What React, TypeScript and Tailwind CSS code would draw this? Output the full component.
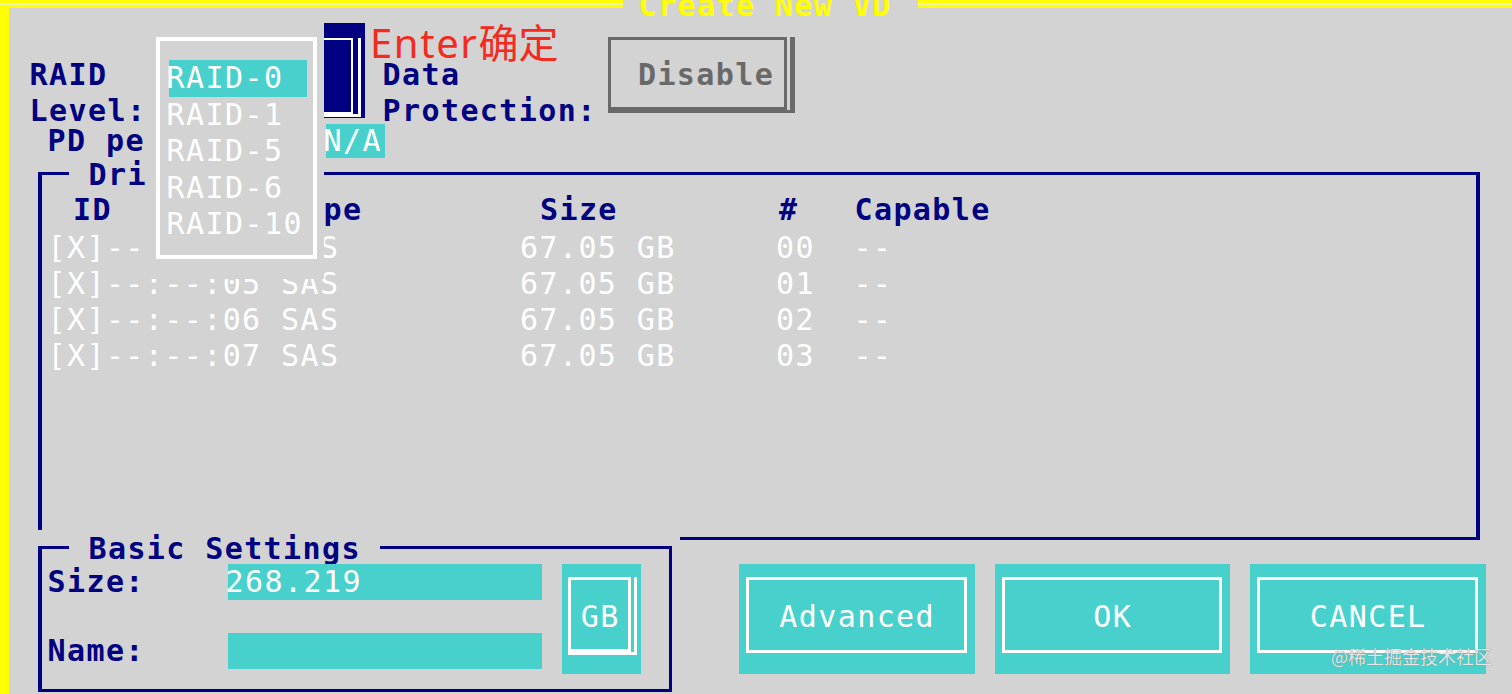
const raidLevels = ["RAID-0", "RAID-1", "RAID-5", "RAID-6", "RAID-10"]

const drives = [
  { id: "[X]--:--:04 SAS", size: "67.05 GB", slot: "00", capable: "--" },
  { id: "[X]--:--:05 SAS", size: "67.05 GB", slot: "01", capable: "--" },
  { id: "[X]--:--:06 SAS", size: "67.05 GB", slot: "02", capable: "--" },
  { id: "[X]--:--:07 SAS", size: "67.05 GB", slot: "03", capable: "--" },
]

// ─── Frame pieces ─────────────────────────────────────────────────────────────

function YellowRule({ className }: { className: string }) {
  return (
    <div className={`flex flex-col ${className}`}>
      <div className="h-[3px] bg-[#ffff00]" />
      <div className="h-[2px] bg-[#f2f2a6]" />
      <div className="h-[3px] bg-[#ffff00]" />
    </div>
  )
}

function PanelTitle({ children }: { children: string }) {
  return (
    <div className="-mt-[18.5px] ml-[27px] h-[36px] w-fit whitespace-pre bg-[#d3d3d3] font-bold text-[#000080]">
      {children}
    </div>
  )
}

function ActionButton({ label, width }: { label: string; width: string }) {
  return (
    <div className={`h-[110px] bg-[#48d1cc] pb-[21px] pl-[7px] pr-[8px] pt-[13px] ${width}`}>
      <div className="flex h-full items-center justify-center border-[3px] border-white pl-[1.4px] pt-[3px] text-white">
        {label}
      </div>
    </div>
  )
}

// first drive row sits under the open list: only its ends show
function DriveId({ id, covered }: { id: string; covered: boolean }) {
  if (!covered) return <>{id}</>
  return (
    <>
      {id.slice(0, 5)}
      <span className="ml-[175.1px]">{id.slice(14)}</span>
    </>
  )
}

// ─── Screen ───────────────────────────────────────────────────────────────────

export default function App() {
  return (
    <div className="relative flex h-[694px] w-[1512px] flex-col overflow-hidden bg-[#d3d3d3] font-['DejaVu_Sans_Mono',monospace] text-[30px] leading-[36px] tracking-[1.4px]">
      {/* title bar */}
      <div className="flex h-[8px] shrink-0">
        <YellowRule className="w-[623px]" />
        <div className="h-[8px] w-[295px] pl-[15.6px]">
          <div className="-mt-[12px] whitespace-pre font-bold text-[#ffff00]">Create New VD</div>
        </div>
        <YellowRule className="flex-1" />
      </div>

      <div className="flex flex-1">
        <div className="flex w-[9px] shrink-0">
          <div className="w-[3px] bg-[#ffff00]" />
          <div className="w-[1px] bg-[#f2f2a6]" />
          <div className="w-[5px] bg-[#ffff00]" />
        </div>

        <div className="flex flex-1 flex-col">
          {/* raid level / data protection */}
          <div className="flex h-[116px] shrink-0 items-start">
            <div className="ml-[20.6px] mt-[48.5px] whitespace-pre font-bold text-[#000080]">
              {"RAID\nLevel:"}
            </div>
            <div className="ml-[19.6px] mt-[15px] flex h-[95px] w-[199px] items-start justify-end bg-[#000080] pr-[4px] pt-[15px]">
              <div className="border-b-[3px] border-r-[3px] border-white pr-[5px]">
                <div className="h-[76px] w-[170px] border-2 border-white" />
              </div>
            </div>
            <div className="ml-[17.6px] mt-[48.5px] whitespace-pre font-bold text-[#000080]">
              {"Data\nProtection:"}
            </div>
            <div className="ml-[11.3px] mt-[29px] border-b-[3px] border-r-[5px] border-[#696969] pr-[3px]">
              <div className="h-[73px] w-[179px] border-[3px] border-[#696969] pl-[27px] pt-[16.5px] font-bold text-[#696969]">
                Disable
              </div>
            </div>
          </div>

          <div className="flex h-[34px] shrink-0 leading-[34px]">
            <div className="ml-[38.6px] w-[233.5px] whitespace-pre font-bold text-[#000080]">PD pe</div>
            <div className="ml-[44.9px] w-[59px] bg-[#48d1cc] text-white">
              <span className="-ml-[2.4px]">N/A</span>
            </div>
          </div>

          {/* drives */}
          <div className="ml-[29px] mt-[14px] h-[368px] w-[1442px] shrink-0 border-x-4 border-y-[3px] border-[#000080]">
            <PanelTitle> Dri</PanelTitle>
            <div className="-mt-px flex whitespace-pre font-bold text-[#000080]">
              <span className="ml-[31px] w-[211.6px]">ID</span>
              <span className="w-[255.4px]">
                <span className="ml-[38.9px]">pe</span>
              </span>
              <span className="w-[239px]">Size</span>
              <span className="w-[75.5px]">#</span>
              <span>Capable</span>
            </div>
            <div className="mt-[2px] leading-[36.3px] text-white">
              {drives.map((d, i) => (
                <div key={d.slot} className="flex whitespace-pre">
                  <span className="ml-[5.5px] w-[472.5px]">
                    <DriveId id={d.id} covered={i === 0} />
                  </span>
                  <span className="w-[256px]">{d.size}</span>
                  <span className="w-[77.4px]">{d.slot}</span>
                  <span>{d.capable}</span>
                </div>
              ))}
            </div>
          </div>

          {/* basic settings + actions */}
          <div className="-mt-[10px] flex items-start">
            <div className="ml-[29px] w-[642px] shrink-0 bg-[#d3d3d3] pt-[16px]">
              <div className="h-[146px] w-[634px] border-[3px] border-l-4 border-[#000080]">
                <div className="-mb-[2.5px]">
                  <PanelTitle> Basic Settings </PanelTitle>
                </div>
                <div className="flex items-start">
                  <div className="flex flex-col">
                    <div className="flex h-[36px]">
                      <span className="ml-[5.5px] w-[180.5px] font-bold text-[#000080]">Size:</span>
                      <div className="w-[314px] bg-[#48d1cc] text-white">
                        <span className="-ml-[2.4px]">268.219</span>
                      </div>
                    </div>
                    <div className="mt-[33px] flex h-[36px]">
                      <span className="ml-[5.5px] w-[180.5px] font-bold text-[#000080]">Name:</span>
                      <div className="w-[314px] bg-[#48d1cc]" />
                    </div>
                  </div>
                  <div className="ml-[20px] h-[110px] w-[79px] bg-[#48d1cc] pl-[6px] pt-[13px]">
                    <div className="w-fit border-b-[3px] border-r-[3px] border-white pr-[3px]">
                      <div className="flex h-[75px] w-[63px] items-center justify-center border-[3px] border-white pl-[1.4px] pt-[4px] text-white">
                        GB
                      </div>
                    </div>
                  </div>
                </div>
              </div>
            </div>

            <div className="ml-[59px] mt-[34px] flex gap-[20px]">
              <ActionButton label="Advanced" width="w-[236px]" />
              <ActionButton label="OK" width="w-[235px]" />
              <ActionButton label="CANCEL" width="w-[236px]" />
            </div>
          </div>
        </div>
      </div>

      {/* open RAID level list */}
      <div className="absolute left-[147px] top-[20px] h-[259px] w-[177px] bg-[#d3d3d3] pl-[9px] pt-[17px]">
        <div className="h-[222px] w-[161px] border-4 border-white pl-[9px] pt-[19px] leading-[36.5px] text-white">
          {raidLevels.map((lvl, i) => (
            <div key={lvl} className={i === 0 ? "w-[138px] bg-[#48d1cc]" : "w-[138px]"}>
              <span className="-ml-[2.4px]">{lvl}</span>
            </div>
          ))}
        </div>
      </div>

      {/* annotation */}
      <div className="absolute left-[370px] top-[23px] font-['Noto_Sans','Noto_Sans_CJK_SC',sans-serif] text-[40px] leading-[40px] tracking-normal text-[#f52a1f]">
        <span className="tracking-[1.6px]">Enter</span>确定
      </div>

      {/* watermark */}
      <div className="absolute right-[20px] top-[645px] font-['Noto_Sans_CJK_SC',sans-serif] text-[18px] leading-[22px] tracking-normal text-[#e6e6e6] [text-shadow:0_0_1px_#6f6f6f]">
        @稀土掘金技术社区
      </div>
    </div>
  )
}
